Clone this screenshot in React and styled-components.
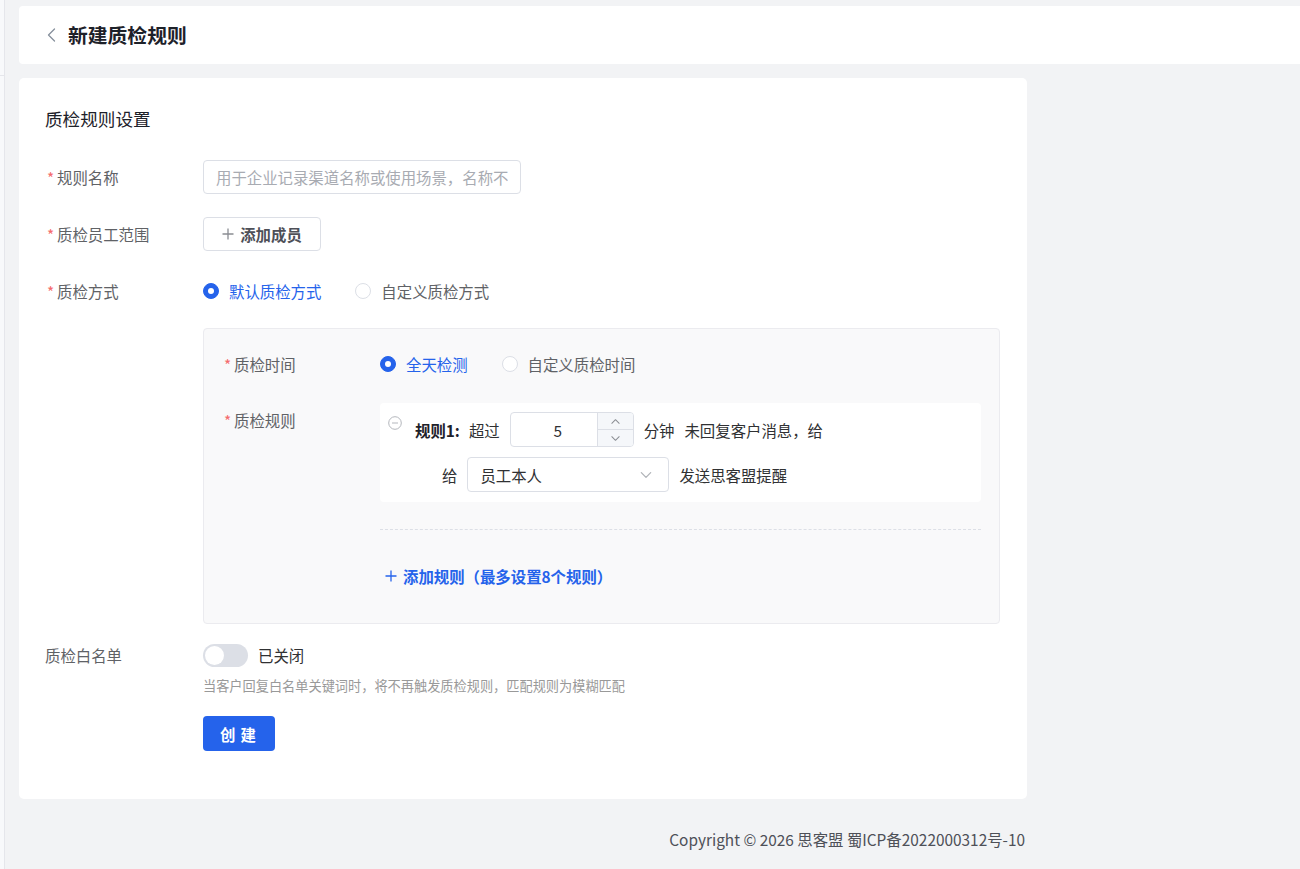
import React from "react";
import styled, { createGlobalStyle } from "styled-components";

const Global = createGlobalStyle`
  html, body { margin: 0; padding: 0; }
  body {
    background: #f2f3f5;
    font-family: "Noto Sans CJK SC", "Microsoft YaHei", sans-serif;
    color: #303133;
    -webkit-font-smoothing: antialiased;
  }
  * { box-sizing: border-box; }
`;

const BLUE = "#2563eb";

const Shell = styled.div`
  display: flex;
  min-height: 869px;
`;

const Sidebar = styled.aside`
  width: 5px;
  flex: none;
  background: #f8f9fb;
  border-right: 1px solid #e5e6eb;
`;

const SidebarTop = styled.div`
  height: 76px;
  border-bottom: 1px solid #e5e6eb;
`;

const Main = styled.main`
  flex: 1;
  padding: 6px 0 0 14px;
  display: flex;
  flex-direction: column;
`;

const Header = styled.header`
  height: 58px;
  background: #fff;
  border-radius: 4px 0 0 4px;
  display: flex;
  align-items: center;
  padding-left: 24px;
`;

const BackBtn = styled.button`
  border: 0;
  background: none;
  padding: 0;
  width: 16px;
  height: 20px;
  display: flex;
  align-items: center;
  justify-content: center;
  margin-right: 9px;
  cursor: pointer;
`;

const Title = styled.h1`
  margin: 0;
  font-size: 19.8px;
  font-weight: 700;
  color: #1d2129;
  line-height: 28px;
`;

const Card = styled.section`
  margin-top: 14px;
  width: 1008px;
  background: #fff;
  border-radius: 5px;
  padding: 29px 26px 48px 26px;
`;

const SectionTitle = styled.h2`
  margin: 0 0 29px 0;
  font-size: 17.6px;
  font-weight: 400;
  line-height: 24px;
  color: #1d2129;
`;

const FormRow = styled.div`
  display: flex;
  align-items: ${(p) => (p.$top ? "flex-start" : "center")};
  margin-bottom: ${(p) => p.$mb ?? 23}px;
`;

const Label = styled.label`
  width: 158px;
  flex: none;
  font-size: 15.4px;
  line-height: ${(p) => p.$lh ?? 34}px;
  color: #606266;
  display: flex;
  align-items: center;
`;

const Star = styled.span`
  color: #f56c6c;
  width: 12px;
  font-size: 15.4px;
  padding-left: 2px;
`;

const Field = styled.div`
  flex: 1;
  min-width: 0;
`;

const TextInput = styled.input`
  width: 318px;
  height: 34px;
  border: 1px solid #dcdfe6;
  border-radius: 4px;
  padding: 0 12px;
  font-family: inherit;
  font-size: 15.4px;
  color: #303133;
  outline: none;
  &::placeholder { color: #a8abb2; }
`;

const GhostButton = styled.button`
  height: 34px;
  width: 118px;
  border: 1px solid #dcdfe6;
  background: #fff;
  border-radius: 4px;
  display: flex;
  align-items: center;
  justify-content: center;
  gap: 6px;
  font-family: inherit;
  font-size: 15.4px;
  font-weight: 700;
  color: #4e5058;
  cursor: pointer;
`;

const RadioGroup = styled.div`
  display: flex;
  align-items: center;
  gap: ${(p) => p.$gap}px;
  height: 34px;
`;

const RadioItem = styled.label`
  display: flex;
  align-items: center;
  gap: 10px;
  font-size: 15.4px;
  color: ${(p) => (p.$checked ? BLUE : "#606266")};
  cursor: pointer;
`;

const RadioDot = styled.span`
  width: 16px;
  height: 16px;
  border-radius: 50%;
  flex: none;
  background: ${(p) => (p.$checked ? BLUE : "#fff")};
  border: 1px solid ${(p) => (p.$checked ? BLUE : "#dcdfe6")};
  display: flex;
  align-items: center;
  justify-content: center;
  &::after {
    content: "";
    width: 6px;
    height: 6px;
    border-radius: 50%;
    background: #fff;
    display: ${(p) => (p.$checked ? "block" : "none")};
  }
`;

const SubBox = styled.div`
  margin: -3px 0 14px 158px;
  width: 797px;
  background: #f9f9fa;
  border: 1px solid #ebebef;
  border-radius: 4px;
  padding: 18px 18px 37px 18px;
`;

const RuleColumn = styled.div`
  flex: 1;
  display: flex;
  flex-direction: column;
`;

const RuleCard = styled.div`
  background: #fff;
  border-radius: 4px;
  padding: 9px 0 10px 8px;
  display: flex;
  flex-direction: column;
  gap: 10px;
`;

const RuleLine = styled.div`
  display: flex;
  align-items: center;
  padding-left: ${(p) => p.$indent ?? 0}px;
  height: 35px;
  font-size: 15.4px;
  color: #303133;
`;

const RemoveIcon = styled.span`
  align-self: flex-start;
  margin-top: 4px;
  width: 14px;
  height: 14px;
  margin-right: 13px;
  display: flex;
`;

const RuleName = styled.span`
  font-weight: 700;
  color: #1d2129;
  margin-right: 9px;
`;

const Text = styled.span`
  margin-right: ${(p) => p.$mr ?? 0}px;
  white-space: nowrap;
`;

const NumberBox = styled.div`
  width: 124px;
  height: 35px;
  border: 1px solid #dcdfe6;
  border-radius: 4px;
  display: flex;
  overflow: hidden;
  margin: 0 10px 0 10px;
`;

const NumberValue = styled.div`
  flex: 1;
  display: flex;
  align-items: center;
  justify-content: center;
  padding-left: 8px;
  font-size: 15.4px;
  color: #303133;
`;

const Steppers = styled.div`
  width: 36px;
  border-left: 1px solid #dcdfe6;
  display: flex;
  flex-direction: column;
  background: #f5f7fa;
`;

const Step = styled.div`
  flex: 1;
  display: flex;
  align-items: center;
  justify-content: center;
  & + & { border-top: 1px solid #dcdfe6; }
`;

const SelectBox = styled.div`
  width: 202px;
  height: 35px;
  border: 1px solid #dcdfe6;
  border-radius: 4px;
  background: #fff;
  display: flex;
  align-items: center;
  justify-content: space-between;
  padding: 0 15px 0 12px;
  margin: 0 10px;
  font-size: 15.4px;
  color: #303133;
`;

const Divider = styled.div`
  border-top: 1px dashed #dcdfe6;
  margin: 27px 0 36px 0;
`;

const AddLink = styled.button`
  align-self: flex-start;
  border: 0;
  background: none;
  padding: 0 0 0 5px;
  display: flex;
  align-items: center;
  gap: 6px;
  font-family: inherit;
  font-size: 15.4px;
  font-weight: 700;
  line-height: 20px;
  color: ${BLUE};
  cursor: pointer;
`;

const SwitchRow = styled.div`
  display: flex;
  align-items: center;
  gap: 10px;
  height: 34px;
`;

const SwitchTrack = styled.span`
  width: 45px;
  height: 23px;
  border-radius: 12px;
  background: ${(p) => (p.$on ? BLUE : "#dcdfe6")};
  display: flex;
  align-items: center;
  padding: 2px;
  justify-content: ${(p) => (p.$on ? "flex-end" : "flex-start")};
  &::after {
    content: "";
    width: 19px;
    height: 19px;
    border-radius: 50%;
    background: #fff;
  }
`;

const SwitchText = styled.span`
  font-size: 15.4px;
  color: #303133;
`;

const Hint = styled.div`
  font-size: 13.2px;
  line-height: 18px;
  color: #999;
  margin-top: 5px;
`;

const PrimaryButton = styled.button`
  margin-top: 21px;
  width: 72px;
  height: 35px;
  border: 0;
  border-radius: 4px;
  background: ${BLUE};
  color: #fff;
  font-family: inherit;
  font-size: 15.4px;
  font-weight: 700;
  letter-spacing: 5px;
  padding-left: 9px;
  cursor: pointer;
`;

const Footer = styled.footer`
  width: 1008px;
  text-align: right;
  padding: 28px 2px 0 0;
  font-size: 15.4px;
  line-height: 24px;
  color: #4e5058;
`;

const Chevron = ({ dir = "down", size = 10, color = "#a8abb2" }) => {
  const d = {
    down: "M2 4 L6 8 L10 4",
    up: "M2 8 L6 4 L10 8",
  }[dir];
  return (
    <svg width={size} height={size} viewBox="0 0 12 12" fill="none">
      <path d={d} stroke={color} strokeWidth="1.1" strokeLinecap="round" strokeLinejoin="round" />
    </svg>
  );
};

const Plus = ({ color = "#606266", size = 12 }) => (
  <svg width={size} height={size} viewBox="0 0 12 12" fill="none">
    <path d="M6 0.5 V11.5 M0.5 6 H11.5" stroke={color} strokeWidth="1.3" />
  </svg>
);

const Radio = ({ checked, children }) => (
  <RadioItem $checked={checked}>
    <RadioDot $checked={checked} />
    {children}
  </RadioItem>
);

export default function App() {
  return (
    <>
      <Global />
      <Shell>
        <Sidebar>
          <SidebarTop />
        </Sidebar>
        <Main>
          <Header>
            <BackBtn aria-label="返回">
              <svg width="9" height="14" viewBox="0 0 9 14" fill="none">
                <path d="M7.5 1 L1.5 7 L7.5 13" stroke="#86909c" strokeWidth="1.3" strokeLinecap="round" strokeLinejoin="round" />
              </svg>
            </BackBtn>
            <Title>新建质检规则</Title>
          </Header>

          <Card>
            <SectionTitle>质检规则设置</SectionTitle>

            <FormRow>
              <Label><Star>*</Star>规则名称</Label>
              <Field>
                <TextInput placeholder="用于企业记录渠道名称或使用场景，名称不可重复" />
              </Field>
            </FormRow>

            <FormRow>
              <Label><Star>*</Star>质检员工范围</Label>
              <Field>
                <GhostButton>
                  <Plus color="#8a8d93" size={12} />
                  添加成员
                </GhostButton>
              </Field>
            </FormRow>

            <FormRow $mb={23}>
              <Label><Star>*</Star>质检方式</Label>
              <Field>
                <RadioGroup $gap={34}>
                  <Radio checked>默认质检方式</Radio>
                  <Radio>自定义质检方式</Radio>
                </RadioGroup>
              </Field>
            </FormRow>

            <SubBox>
              <FormRow $mb={22}>
                <Label><Star>*</Star>质检时间</Label>
                <Field>
                  <RadioGroup $gap={34}>
                    <Radio checked>全天检测</Radio>
                    <Radio>自定义质检时间</Radio>
                  </RadioGroup>
                </Field>
              </FormRow>

              <FormRow $top $mb={0}>
                <Label $lh={34}><Star>*</Star>质检规则</Label>
                <RuleColumn>
                  <RuleCard>
                    <RuleLine>
                      <RemoveIcon>
                        <svg width="14" height="14" viewBox="0 0 14 14" fill="none">
                          <circle cx="7" cy="7" r="6.3" stroke="#b4b7bd" strokeWidth="1" />
                          <path d="M4 7 H10" stroke="#b4b7bd" strokeWidth="1" />
                        </svg>
                      </RemoveIcon>
                      <RuleName>规则1:</RuleName>
                      <Text>超过</Text>
                      <NumberBox>
                        <NumberValue>5</NumberValue>
                        <Steppers>
                          <Step><Chevron dir="up" size={11} color="#8a8d93" /></Step>
                          <Step><Chevron dir="down" size={11} color="#8a8d93" /></Step>
                        </Steppers>
                      </NumberBox>
                      <Text $mr={10}>分钟</Text>
                      <Text>未回复客户消息，给</Text>
                    </RuleLine>
                    <RuleLine $indent={54}>
                      <Text>给</Text>
                      <SelectBox>
                        员工本人
                        <Chevron dir="down" size={14} color="#b0b3b8" />
                      </SelectBox>
                      <Text>发送思客盟提醒</Text>
                    </RuleLine>
                  </RuleCard>
                  <Divider />
                  <AddLink>
                    <Plus color={BLUE} size={12} />
                    添加规则（最多设置8个规则）
                  </AddLink>
                </RuleColumn>
              </FormRow>
            </SubBox>

            <FormRow $top $mb={0}>
              <Label>质检白名单</Label>
              <Field>
                <SwitchRow>
                  <SwitchTrack />
                  <SwitchText>已关闭</SwitchText>
                </SwitchRow>
                <Hint>当客户回复白名单关键词时，将不再触发质检规则，匹配规则为模糊匹配</Hint>
                <PrimaryButton>创建</PrimaryButton>
              </Field>
            </FormRow>
          </Card>

          <Footer>Copyright © 2026 思客盟 蜀ICP备2022000312号-10</Footer>
        </Main>
      </Shell>
    </>
  );
}
